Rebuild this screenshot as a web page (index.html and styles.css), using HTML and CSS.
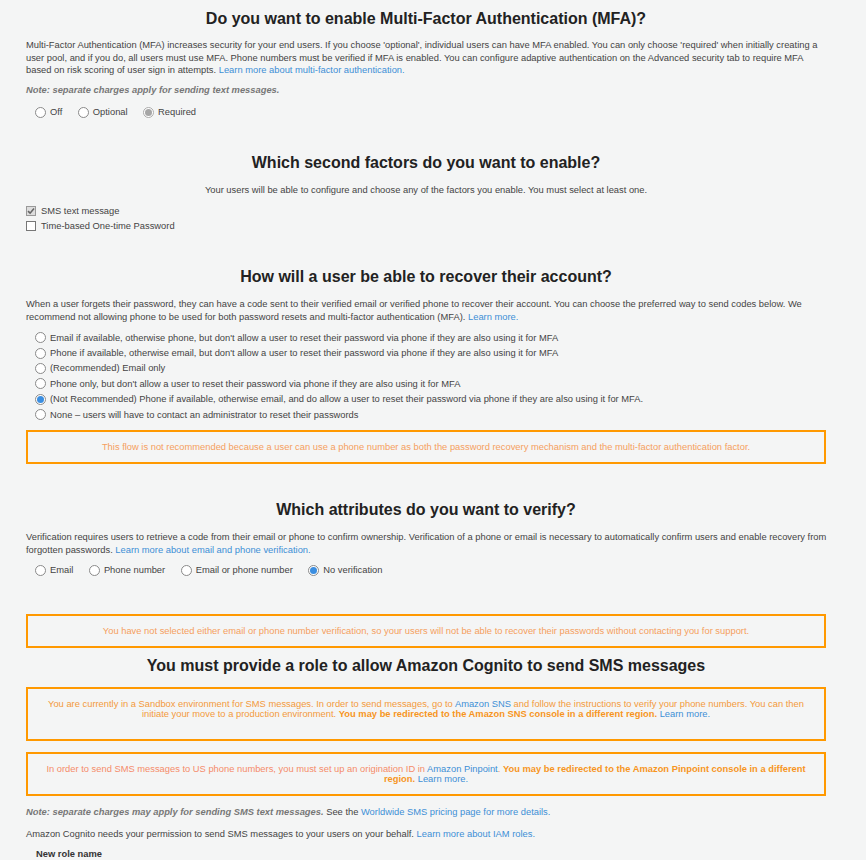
FILE: index.html
```html
<!DOCTYPE html>
<html>
<head>
<meta charset="utf-8">
<link rel="stylesheet" href="styles.css">
</head>
<body>
<div class="page">
  <h2 class="title t1">Do you want to enable Multi-Factor Authentication (MFA)?</h2>
  <p class="para p1">Multi-Factor Authentication (MFA) increases security for your end users. If you choose 'optional', individual users can have MFA enabled. You can only choose 'required' when initially creating a user pool, and if you do, all users must use MFA. Phone numbers must be verified if MFA is enabled. You can configure adaptive authentication on the Advanced security tab to require MFA based on risk scoring of user sign in attempts. <a class="link">Learn more about multi-factor authentication.</a></p>
  <p class="note n1">Note: separate charges apply for sending text messages.</p>
  <div class="radio-row r1">
    <label class="opt"><span class="radio"></span>Off</label>
    <label class="opt"><span class="radio"></span>Optional</label>
    <label class="opt"><span class="radio disabled-on"></span>Required</label>
  </div>

  <h2 class="title t2">Which second factors do you want to enable?</h2>
  <p class="center-text">Your users will be able to configure and choose any of the factors you enable. You must select at least one.</p>
  <div class="checks">
    <label class="check"><span class="box checked"><svg width="8" height="8" viewBox="0 0 8 8"><path d="M1 4.2 L3.1 6.2 L7 1.6" fill="none" stroke="#666" stroke-width="1.6"/></svg></span>SMS text message</label>
    <label class="check"><span class="box"></span>Time-based One-time Password</label>
  </div>

  <h2 class="title t3">How will a user be able to recover their account?</h2>
  <p class="para p3">When a user forgets their password, they can have a code sent to their verified email or verified phone to recover their account. You can choose the preferred way to send codes below. We recommend not allowing phone to be used for both password resets and multi-factor authentication (MFA). <a class="link">Learn more.</a></p>
  <div class="radio-list">
    <label class="opt"><span class="radio"></span>Email if available, otherwise phone, but don't allow a user to reset their password via phone if they are also using it for MFA</label>
    <label class="opt"><span class="radio"></span>Phone if available, otherwise email, but don't allow a user to reset their password via phone if they are also using it for MFA</label>
    <label class="opt"><span class="radio"></span>(Recommended) Email only</label>
    <label class="opt"><span class="radio"></span>Phone only, but don't allow a user to reset their password via phone if they are also using it for MFA</label>
    <label class="opt"><span class="radio on"></span>(Not Recommended) Phone if available, otherwise email, and do allow a user to reset their password via phone if they are also using it for MFA.</label>
    <label class="opt"><span class="radio"></span>None – users will have to contact an administrator to reset their passwords</label>
  </div>
  <div class="warn w1"><p>This flow is not recommended because a user can use a phone number as both the password recovery mechanism and the multi-factor authentication factor.</p></div>

  <h2 class="title t4">Which attributes do you want to verify?</h2>
  <p class="para p4">Verification requires users to retrieve a code from their email or phone to confirm ownership. Verification of a phone or email is necessary to automatically confirm users and enable recovery from forgotten passwords. <a class="link">Learn more about email and phone verification.</a></p>
  <div class="radio-row r4">
    <label class="opt"><span class="radio"></span>Email</label>
    <label class="opt"><span class="radio"></span>Phone number</label>
    <label class="opt"><span class="radio"></span>Email or phone number</label>
    <label class="opt"><span class="radio on"></span>No verification</label>
  </div>
  <div class="warn w2"><p>You have not selected either email or phone number verification, so your users will not be able to recover their passwords without contacting you for support.</p></div>

  <h2 class="title t5">You must provide a role to allow Amazon Cognito to send SMS messages</h2>
  <div class="warn w3"><p>You are currently in a Sandbox environment for SMS messages. In order to send messages, go to <a class="link">Amazon SNS</a> and follow the instructions to verify your phone numbers. You can then initiate your move to a production environment. <b>You may be redirected to the Amazon SNS console in a different region.</b> <a class="link">Learn more.</a></p></div>
  <div class="warn w4"><p>In order to send SMS messages to US phone numbers, you must set up an origination ID in <a class="link">Amazon Pinpoint</a>. <b>You may be redirected to the Amazon Pinpoint console in a different region.</b> <a class="link">Learn more.</a></p></div>
  <p class="para p5"><span class="note-inline">Note: separate charges may apply for sending SMS text messages.</span> See the <a class="link">Worldwide SMS pricing page for more details.</a></p>
  <p class="para p6">Amazon Cognito needs your permission to send SMS messages to your users on your behalf. <a class="link">Learn more about IAM roles.</a></p>
  <div class="field-label">New role name</div>
</div>
</body>
</html>
```
FILE: styles.css
```css
html, body {
  margin: 0;
  padding: 0;
  background: #f4f5f5;
}
body {
  font-family: "Liberation Sans", Arial, sans-serif;
  font-size: 9.35px;
  color: #444;
}
.page {
  width: 800px;
  padding: 0 0 0 26px;
  display: flex;
  flex-direction: column;
}
.title {
  margin: 0;
  font-size: 16px;
  line-height: 20px;
  font-weight: bold;
  text-align: center;
  color: #222;
}
.para, .note, .center-text {
  margin: 0;
  line-height: 12.5px;
}
.para { margin-right: -5px; }
.link { color: #3d8fd6; }
.note {
  font-style: italic;
  font-weight: bold;
  color: #777;
}
.note-inline {
  font-style: italic;
  font-weight: bold;
  color: #777;
}
.center-text { text-align: center; }

.radio-row {
  display: flex;
  gap: 15.5px;
  padding-left: 9px;
  height: 14px;
  align-items: center;
}
.opt {
  display: flex;
  align-items: center;
  gap: 4px;
  line-height: 14px;
}
.radio {
  width: 9px;
  height: 9px;
  border: 1px solid #8a8a8a;
  border-radius: 50%;
  background: #fff;
  box-sizing: content-box;
  flex: none;
  position: relative;
}
.radio.on::after, .radio.disabled-on::after {
  content: "";
  position: absolute;
  left: 1px; top: 1px;
  width: 7px; height: 7px;
  border-radius: 50%;
  background: #3b8ee0;
}
.radio.disabled-on { border-color: #aaa; }
.radio.disabled-on::after { background: #a6a6a6; }

.checks { display: flex; flex-direction: column; }
.check {
  display: flex;
  align-items: center;
  gap: 5px;
  height: 15px;
}
.box {
  width: 8px;
  height: 8px;
  border: 1px solid #777;
  background: #fff;
  display: flex;
  align-items: center;
  justify-content: center;
  flex: none;
}
.box.checked { background: #ddd; border-color: #999; }

.radio-list {
  display: flex;
  flex-direction: column;
  padding-left: 9px;
}
.radio-list .opt { height: 15.4px; }

.warn {
  border: 2px solid #ff9900;
  text-align: center;
  color: #f4a060;
  padding: 9.5px 20px;
}
.warn p { margin: 0; line-height: 11px; }
.warn b { color: #f7951e; }
.w3 { padding-bottom: 19.5px; color: #f39a3c; }
.w4 { color: #f48c6a; padding-left: 13px; padding-right: 13px; }
.w3 p, .w4 p { line-height: 10.5px; }

.t1 { margin-top: 9px; }
.p1 { margin-top: 10px; }
.n1 { margin-top: 7.5px; }
.r1 { margin-top: 8.5px; }
.t2 { margin-top: 34px; }
.center-text { margin-top: 11px; }
.checks { margin-top: 7px; }
.t3 { margin-top: 33.5px; }
.p3 { margin-top: 11px; }
.radio-list { margin-top: 7px; }
.w1 { margin-top: 8px; }
.t4 { margin-top: 36px; }
.p4 { margin-top: 11px; }
.r4 { margin-top: 7px; }
.w2 { margin-top: 37px; }
.t5 { margin-top: 8px; }
.w3 { margin-top: 11px; }
.w4 { margin-top: 11px; }
.p5 { margin-top: 10px; }
.p6 { margin-top: 9.5px; }
.field-label {
  margin-top: 7.5px;
  padding-left: 10px;
  font-weight: bold;
  color: #333;
  line-height: 12px;
}
```
